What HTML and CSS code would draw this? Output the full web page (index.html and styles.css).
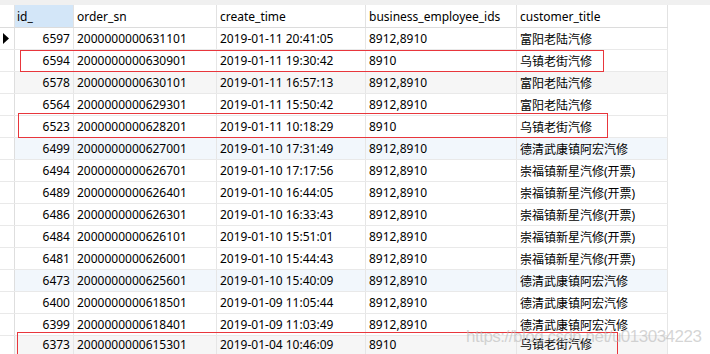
FILE: index.html
```html
<!DOCTYPE html>
<html lang="zh">
<head>
<meta charset="utf-8">
<title>result grid</title>
<link rel="stylesheet" href="styles.css">
</head>
<body>
<div class="topband"></div>
<div class="grid">
  <div class="row head">
    <div class="c ind"></div>
    <div class="c id sel">id_</div>
    <div class="c">order_sn</div>
    <div class="c">create_time</div>
    <div class="c">business_employee_ids</div>
    <div class="c">customer_title</div>
  </div>
  <div class="row">
    <div class="c ind"><svg class="arrow" width="6" height="11" viewBox="0 0 6 11"><polygon points="0,0 6,5.5 0,11" fill="#000"/></svg></div>
    <div class="c num">6597</div><div class="c">2000000000631101</div><div class="c">2019-01-11 20:41:05</div><div class="c">8912,8910</div><div class="c">富阳老陆汽修</div>
  </div>
  <div class="row">
    <div class="c ind"></div>
    <div class="c num">6594</div><div class="c">2000000000630901</div><div class="c">2019-01-11 19:30:42</div><div class="c">8910</div><div class="c">乌镇老街汽修</div>
  </div>
  <div class="row gray">
    <div class="c ind"></div>
    <div class="c num">6578</div><div class="c">2000000000630101</div><div class="c">2019-01-11 16:57:13</div><div class="c">8912,8910</div><div class="c">富阳老陆汽修</div>
  </div>
  <div class="row">
    <div class="c ind"></div>
    <div class="c num">6564</div><div class="c">2000000000629301</div><div class="c">2019-01-11 15:50:42</div><div class="c">8912,8910</div><div class="c">富阳老陆汽修</div>
  </div>
  <div class="row">
    <div class="c ind"></div>
    <div class="c num">6523</div><div class="c">2000000000628201</div><div class="c">2019-01-11 10:18:29</div><div class="c">8910</div><div class="c">乌镇老街汽修</div>
  </div>
  <div class="row blue">
    <div class="c ind"></div>
    <div class="c num">6499</div><div class="c">2000000000627001</div><div class="c">2019-01-10 17:31:49</div><div class="c">8912,8910</div><div class="c">德清武康镇阿宏汽修</div>
  </div>
  <div class="row">
    <div class="c ind"></div>
    <div class="c num">6494</div><div class="c">2000000000626701</div><div class="c">2019-01-10 17:17:56</div><div class="c">8912,8910</div><div class="c">崇福镇新星汽修(开票)</div>
  </div>
  <div class="row">
    <div class="c ind"></div>
    <div class="c num">6489</div><div class="c">2000000000626401</div><div class="c">2019-01-10 16:44:05</div><div class="c">8912,8910</div><div class="c">崇福镇新星汽修(开票)</div>
  </div>
  <div class="row">
    <div class="c ind"></div>
    <div class="c num">6486</div><div class="c">2000000000626301</div><div class="c">2019-01-10 16:33:43</div><div class="c">8912,8910</div><div class="c">崇福镇新星汽修(开票)</div>
  </div>
  <div class="row">
    <div class="c ind"></div>
    <div class="c num">6484</div><div class="c">2000000000626101</div><div class="c">2019-01-10 15:51:01</div><div class="c">8912,8910</div><div class="c">崇福镇新星汽修(开票)</div>
  </div>
  <div class="row">
    <div class="c ind"></div>
    <div class="c num">6481</div><div class="c">2000000000626001</div><div class="c">2019-01-10 15:44:43</div><div class="c">8912,8910</div><div class="c">崇福镇新星汽修(开票)</div>
  </div>
  <div class="row blue">
    <div class="c ind"></div>
    <div class="c num">6473</div><div class="c">2000000000625601</div><div class="c">2019-01-10 15:40:09</div><div class="c">8912,8910</div><div class="c">德清武康镇阿宏汽修</div>
  </div>
  <div class="row">
    <div class="c ind"></div>
    <div class="c num">6400</div><div class="c">2000000000618501</div><div class="c">2019-01-09 11:05:44</div><div class="c">8912,8910</div><div class="c">德清武康镇阿宏汽修</div>
  </div>
  <div class="row">
    <div class="c ind"></div>
    <div class="c num">6399</div><div class="c">2000000000618401</div><div class="c">2019-01-09 11:03:49</div><div class="c">8912,8910</div><div class="c">德清武康镇阿宏汽修</div>
  </div>
  <div class="row gray last">
    <div class="c ind"></div>
    <div class="c num">6373</div><div class="c">2000000000615301</div><div class="c">2019-01-04 10:46:09</div><div class="c">8910</div><div class="c">乌镇老街汽修</div>
  </div>
</div>
<div class="mark mark1"></div>
<div class="mark mark2"></div>
<div class="mark mark3"></div>
<div class="watermark">https://blog.csdn.net/u013034223</div>
</body>
</html>
```
FILE: styles.css
```css
html, body {
  margin: 0;
  padding: 0;
  background: #fff;
}
html {
  overflow: hidden;
}
body {
  position: relative;
  width: 710px;
  height: 354px;
  overflow: hidden;
  font-family: "Noto Sans", "Noto Sans CJK SC", sans-serif;
  font-size: 12px;
  color: #000;
}
.topband {
  height: 5px;
  background: #f0f0f0;
}
.grid {
  width: 668px;
}
.row {
  display: grid;
  grid-template-columns: 15px 59px 143px 149px 151px 151px;
  height: 22px;
  box-sizing: border-box;
  border-bottom: 1px solid #e9e9e9;
}
.row.head {
  height: 23px;
  border-bottom: 1px solid #dcdcdc;
}
.row.last {
  height: 18px;
  border-bottom: 0;
  line-height: 14px;
}
.row.gray .c:not(.ind) {
  background: #f6f6f6;
}
.row.blue .c:not(.ind) {
  background: #f2f7fc;
}
.c {
  box-sizing: border-box;
  border-right: 1px solid #e6e6e6;
  padding: 0 3px;
  display: flex;
  align-items: center;
  white-space: nowrap;
  overflow: hidden;
}
.c.ind {
  padding: 0;
  border-right-color: #dedede;
  justify-content: center;
}
.head .c {
  border-right-color: #e2e2e2;
}
.head .c.sel {
  background: #d3e6f8;
  padding-left: 2px;
}
.c.num {
  justify-content: flex-end;
}
.arrow {
  display: block;
  margin-left: -3px;
}
.mark {
  position: absolute;
  box-sizing: border-box;
  border: 1px solid #e8363c;
}
.mark1 {
  left: 20px;
  top: 50px;
  width: 584px;
  height: 22px;
}
.mark2 {
  left: 18px;
  top: 113px;
  width: 590px;
  height: 25px;
}
.mark3 {
  left: 17px;
  top: 332px;
  width: 601px;
  height: 22px;
  border-bottom: 0;
}
.watermark {
  position: absolute;
  left: 466px;
  top: 328px;
  font-family: "Liberation Sans", Arial, sans-serif;
  font-size: 17px;
  line-height: 17px;
  letter-spacing: -0.5px;
  color: rgba(185, 185, 185, 0.6);
  white-space: nowrap;
}
```
